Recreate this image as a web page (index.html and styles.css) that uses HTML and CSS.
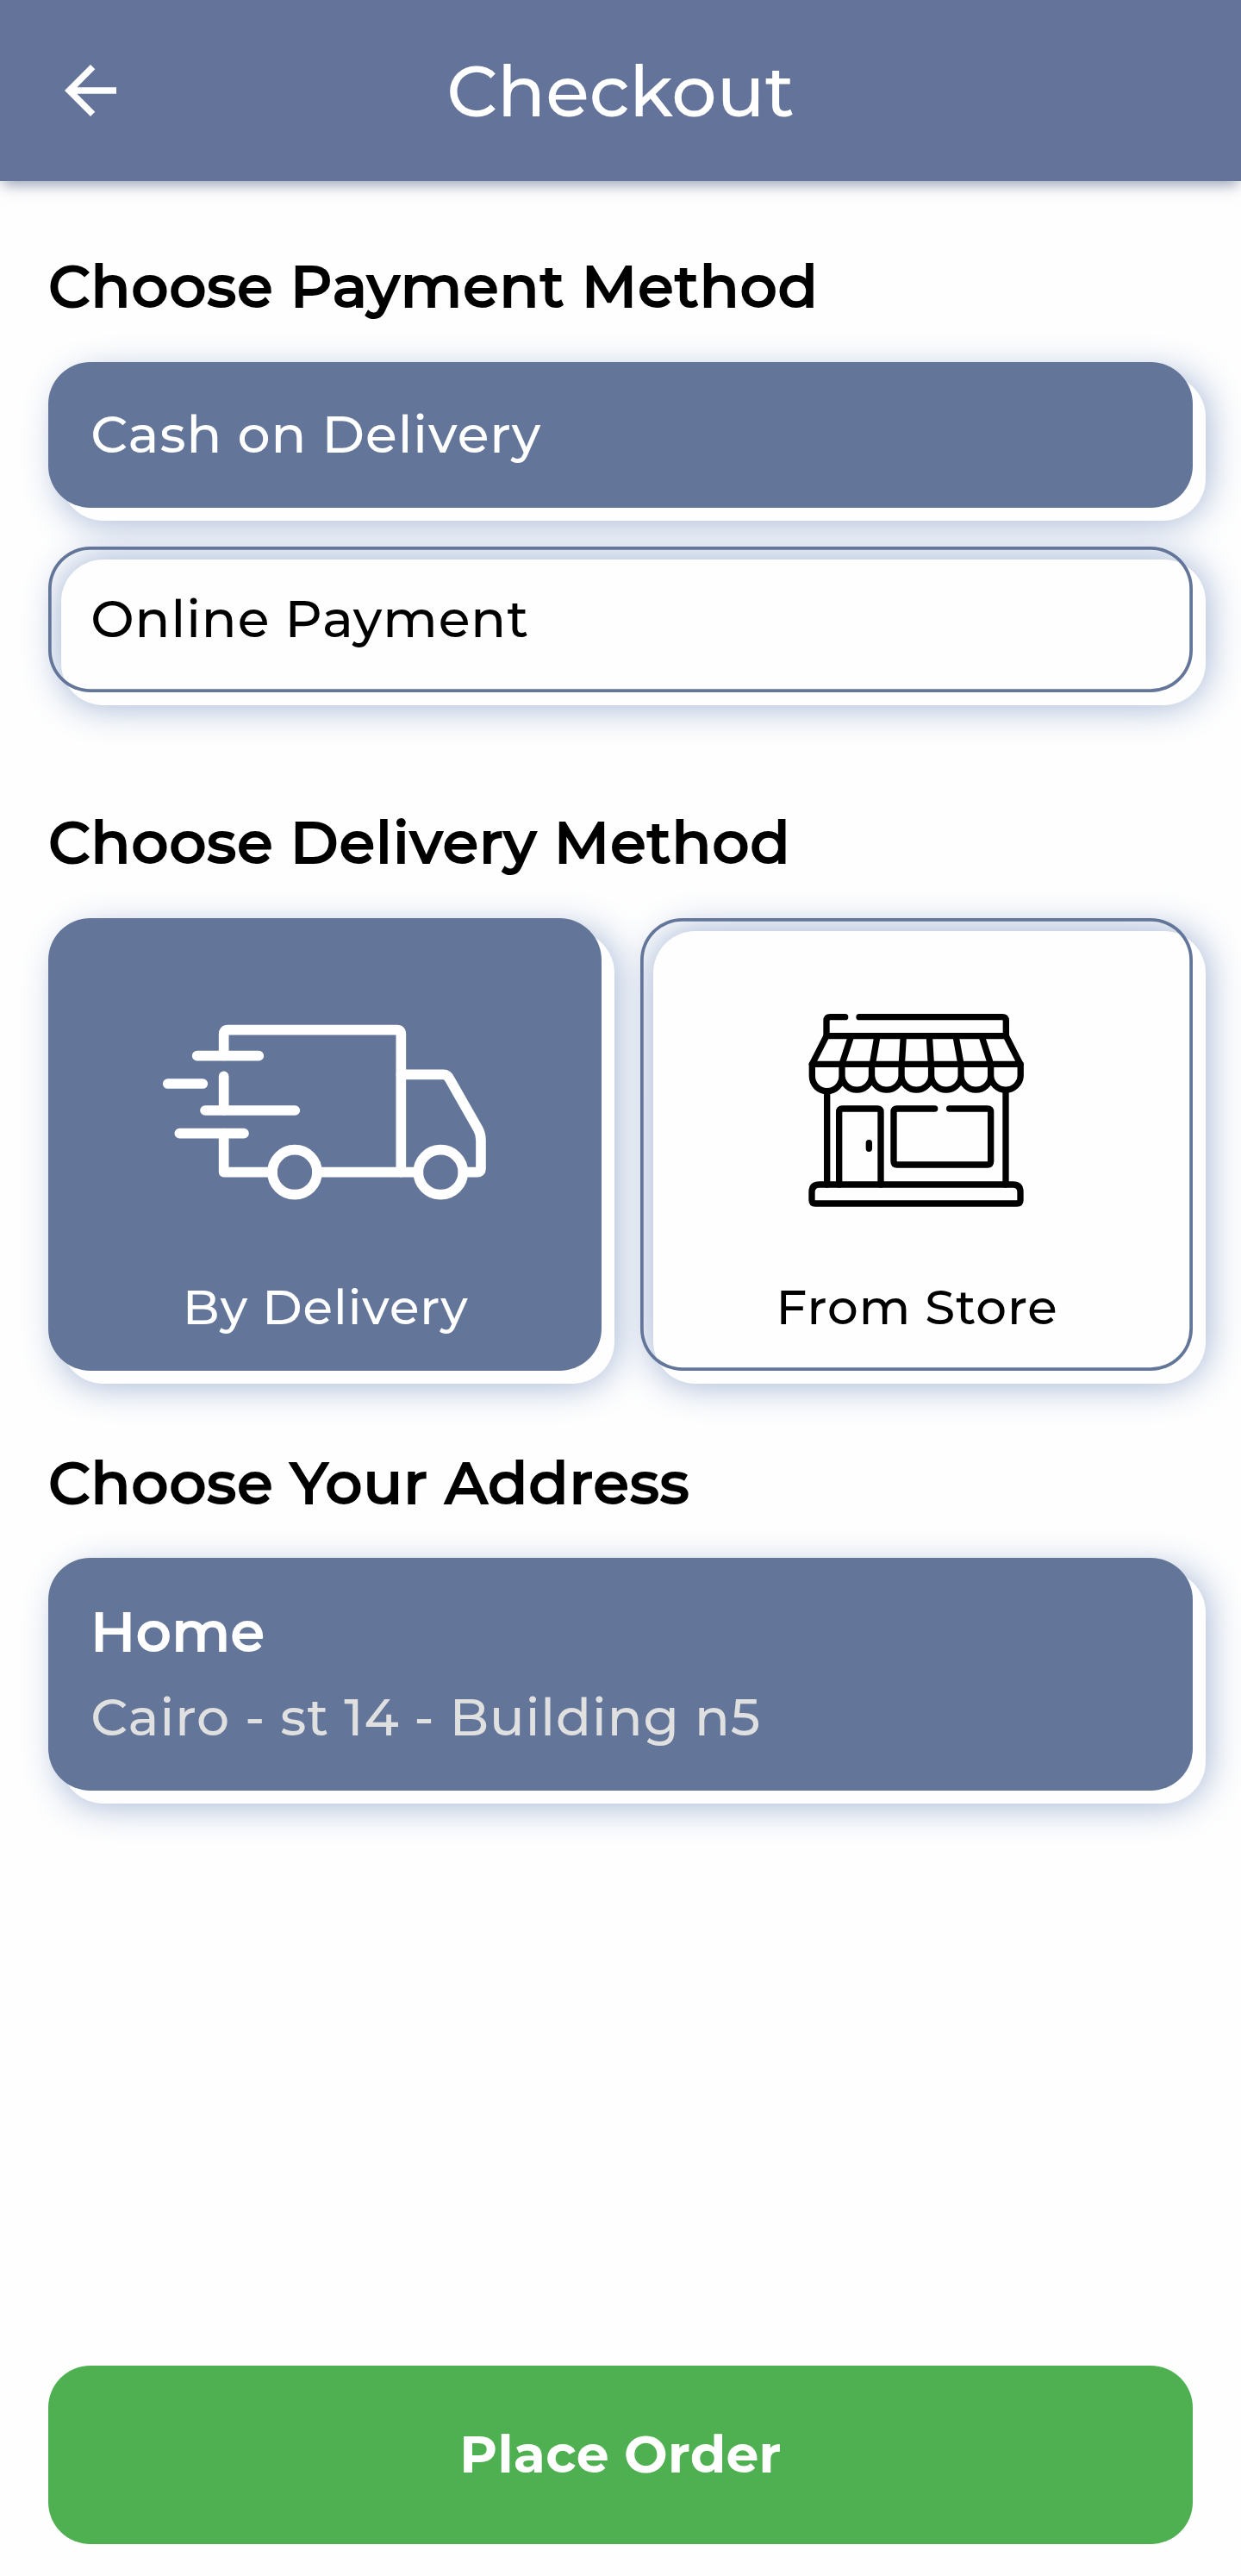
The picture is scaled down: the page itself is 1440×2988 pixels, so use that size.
FILE: index.html
```html
<!DOCTYPE html>
<html lang="en">
<head>
<meta charset="utf-8">
<title>Checkout</title>
<link rel="stylesheet" href="styles.css">
</head>
<body>
<div class="screen">
  <header class="app-bar">
    <button class="back" aria-label="Back">
      <svg viewBox="0 0 24 24" width="90" height="90"><path fill="#fff" d="M20 11H7.83l5.59-5.59L12 4l-8 8 8 8 1.41-1.41L7.83 13H20v-2z"/></svg>
    </button>
    <h1 class="app-title">Checkout</h1>
  </header>

  <main class="content">
    <h2 class="section-title">Choose Payment Method</h2>
    <div class="options">
      <div class="card option selected"><span>Cash on Delivery</span></div>
      <div class="card option"><span>Online Payment</span></div>
    </div>

    <h2 class="section-title delivery-title">Choose Delivery Method</h2>
    <div class="methods">
      <div class="card method selected">
        <svg class="method-icon" viewBox="0 -30 1301 870" fill="none" stroke="#fff" stroke-width="35" stroke-linecap="round" stroke-linejoin="round">
          <path d="M299 223V148Q299 134 313 134H902Q916 134 916 148V629"/>
          <path d="M206 224H421M104 321H226M234 414H547M145 494H369"/>
          <path d="M299 295V414M299 494V629H468M624 629H976M1132 629H1182Q1194 629 1194 617V518Q1194 496 1184 478L1087 308Q1079 289 1063 289H916"/>
          <circle cx="546" cy="629" r="78"/>
          <circle cx="1054" cy="629" r="78"/>
        </svg>
        <span class="method-label">By Delivery</span>
      </div>
      <div class="card method">
        <svg class="method-icon" viewBox="0 0 979 870" fill="none" stroke="#000" stroke-width="22" stroke-linecap="round" stroke-linejoin="round">
          <path d="M242 119H190Q177 119 177 132V185H802V132Q802 119 789 119H291"/>
          <path d="M177 185L127 283H852L802 185M263 185L231 283M354 185L337 283M445 185L439 283M535 185L541 283M627 185L645 283M717 185L749 283"/>
          <path d="M127 283V325a52 52 0 0 0 104 0V283M231 325a52 52 0 0 0 103.600 0V283M334.600 325a52 52 0 0 0 103.600 0V283M438.200 325a52 52 0 0 0 103.600 0V283M541.800 325a52 52 0 0 0 103.600 0V283M645.400 325a52 52 0 0 0 103.600 0V283M749 325a52 52 0 0 0 103.600 0V283"/>
          <path d="M179 378V702M801 378V702M221 702V450Q221 438 233 438H354Q366 438 366 450V702M325 557V577"/>
          <path d="M554 438H423Q411 438 411 450V621Q411 633 423 633H737Q749 633 749 621V450Q749 438 737 438H605"/>
          <path d="M153 702H826Q852 702 852 728V756Q852 768 840 768H138Q126 768 126 756V728Q126 702 153 702Z"/>
        </svg>
        <span class="method-label">From Store</span>
      </div>
    </div>

    <h2 class="section-title address-title">Choose Your Address</h2>
    <div class="card address selected">
      <span class="address-name">Home</span>
      <span class="address-detail">Cairo - st 14 - Building n5</span>
    </div>

    <button class="place-order">Place Order</button>
  </main>
</div>
</body>
</html>
```
FILE: styles.css
```css
* { box-sizing: border-box; }

body {
  margin: 0;
  background: #fefefe;
  color: #000;
  font-family: Montserrat, Inter, sans-serif;
}

button {
  border: 0;
  padding: 0;
  background: none;
  font: inherit;
}

.screen {
  display: flex;
  flex-direction: column;
  width: 1440px;
  height: 2988px;
  overflow: hidden;
}

.app-bar {
  display: grid;
  grid-template-columns: 90px 1fr 90px;
  align-items: center;
  flex: none;
  height: 210px;
  padding: 0 60px;
  background: #63739a;
  box-shadow: 0 8px 15px -3px rgba(80, 94, 130, .55);
}

.back svg { display: block; }

.app-title {
  margin: 0;
  padding-top: 2px;
  font-size: 82.5px;
  font-weight: 500;
  line-height: 100px;
  text-align: center;
}

.app-title, .selected { color: #fff; }

.content {
  display: flex;
  flex-direction: column;
  flex: 1;
  padding: 81px 56.25px 37.5px;
}

.section-title {
  margin: 0;
  font-size: 67.5px;
  font-weight: 500;
  line-height: 82px;
  letter-spacing: 1.07px;
}

/* heavier strokes on the medium letterforms */
.section-title, .address-name { -webkit-text-stroke: 2.1px currentColor; }

.delivery-title { margin-top: 133.5px; }
.address-title { margin-top: 89px; }

.card {
  position: relative;
  isolation: isolate;
}

/* offset sheet behind each card, with its soft halo */
.card::before {
  content: "";
  position: absolute;
  z-index: -1;
  inset: 15px -15px -15px 15px;
  border-radius: 48.75px;
  background: #fefefe;
  box-shadow: 0 0 45px #9bafd1;
}

.card::after {
  content: "";
  position: absolute;
  z-index: -1;
  inset: 0;
  border-radius: 48.75px;
  box-shadow: inset 0 0 0 3.75px #637699;
}

.card.selected::after {
  background: #637699;
  box-shadow: none;
}

.options {
  display: flex;
  flex-direction: column;
  gap: 45px;
  margin-top: 47px;
}

.option {
  height: 168.75px;
  padding: 47px 49px 0;
  font-size: 60px;
  font-weight: 500;
  line-height: 73px;
  letter-spacing: .97px;
}

.methods {
  display: grid;
  grid-template-columns: 1fr 1fr;
  gap: 45px;
  margin-top: 47px;
}

.method {
  display: flex;
  flex-direction: column;
  align-items: center;
  height: 525px;
  padding-top: 75px;
}

.method-icon { height: 290px; }

.method-label {
  margin-top: 50px;
  padding-left: 2px;
  font-size: 56.25px;
  font-weight: 500;
  line-height: 72px;
  letter-spacing: .97px;
}

.address {
  display: flex;
  flex-direction: column;
  height: 270px;
  margin-top: 46px;
  padding: 45px 49px 0;
}

.address-name {
  font-size: 63.75px;
  font-weight: 500;
  line-height: 80px;
  letter-spacing: .94px;
}

.address-detail {
  margin-top: 25px;
  color: #e0e0e0;
  font-size: 60px;
  font-weight: 500;
  line-height: 70px;
  letter-spacing: .97px;
}

.place-order {
  height: 206.25px;
  margin-top: auto;
  padding-bottom: 2px;
  border-radius: 48.75px;
  background: #4eb051;
  color: #fff;
  font-size: 60px;
  font-weight: 700;
  letter-spacing: .28px;
}
```
